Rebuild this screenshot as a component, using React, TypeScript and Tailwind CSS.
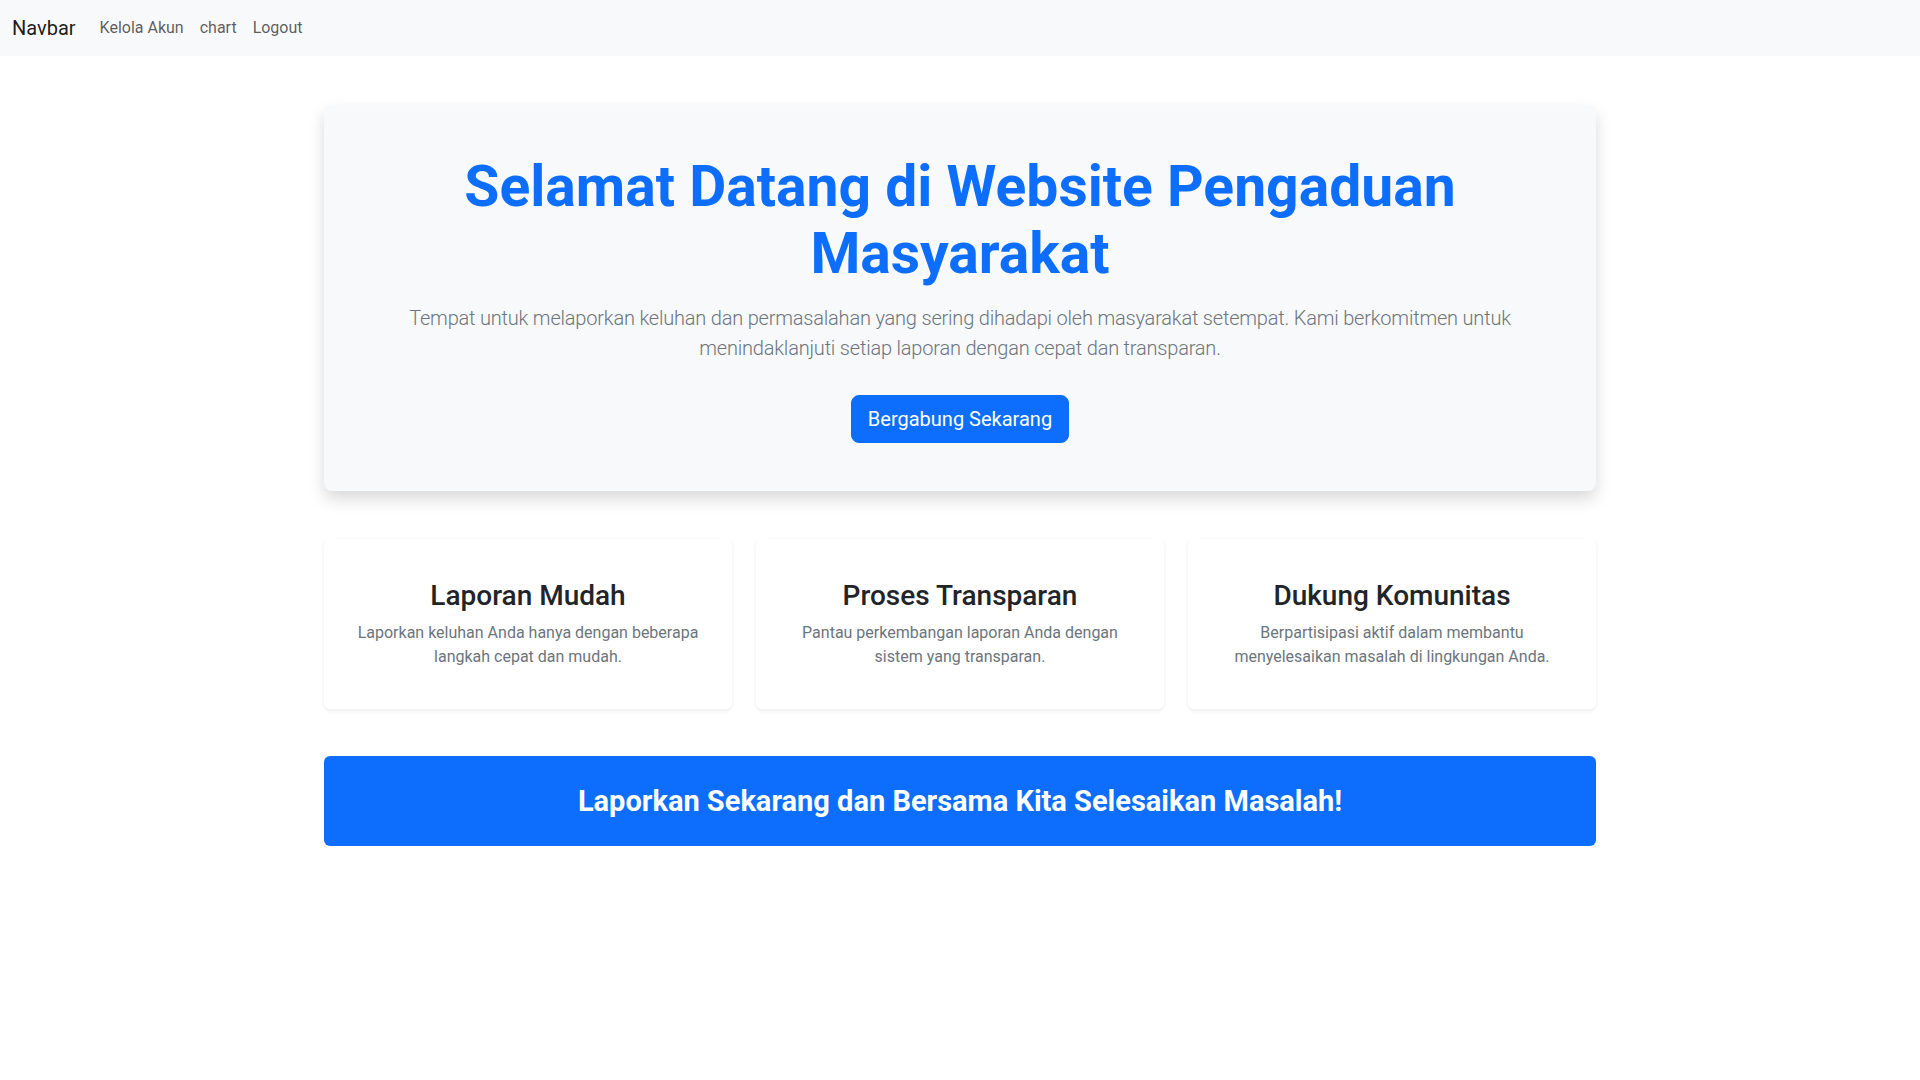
import React from 'react';

const features = [
  {
    title: 'Laporan Mudah',
    text: 'Laporkan keluhan Anda hanya dengan beberapa langkah cepat dan mudah.',
  },
  {
    title: 'Proses Transparan',
    text: 'Pantau perkembangan laporan Anda dengan sistem yang transparan.',
  },
  {
    title: 'Dukung Komunitas',
    text: 'Berpartisipasi aktif dalam membantu menyelesaikan masalah di lingkungan Anda.',
  },
];

const App: React.FC = () => {
  return (
    <div className="min-h-screen bg-white font-['Roboto',sans-serif] text-[#212529]">
      {/* Navbar */}
      <nav className="bg-[#f8f9fa] h-14 flex items-center px-3">
        <a href="#" className="text-xl text-black/90 mr-4 leading-[30px]">Navbar</a>
        <ul className="flex items-center">
          <li><a href="#" className="px-2 text-base text-black/65">Kelola Akun</a></li>
          <li><a href="#" className="px-2 text-base text-black/65">chart</a></li>
          <li><a href="#" className="px-2 text-base text-black/65">Logout</a></li>
        </ul>
      </nav>

      <main className="w-[1272px] mx-auto">
        {/* Hero */}
        <section className="mt-[49px] bg-[#f8f9fa] rounded-lg shadow-[0_8px_16px_rgba(0,0,0,0.15)] p-12 text-center">
          <h1 className="text-[57px] leading-[67px] font-bold text-[#0d6efd] mb-4">
            Selamat Datang di Website Pengaduan Masyarakat
          </h1>
          <p className="text-xl font-light leading-[30px] tracking-[-0.2px] text-[#6c757d]">
            Tempat untuk melaporkan keluhan dan permasalahan yang sering dihadapi oleh masyarakat setempat. Kami berkomitmen untuk menindaklanjuti setiap laporan dengan cepat dan transparan.
          </p>
          <button className="mt-8 bg-[#0d6efd] text-white text-xl leading-[30px] px-4 py-2 rounded-lg border border-[#0d6efd]">
            Bergabung Sekarang
          </button>
        </section>

        {/* Features */}
        <section className="mt-12 grid grid-cols-3 gap-6">
          {features.map((f) => (
            <div key={f.title} className="bg-white rounded-md shadow-[0_2px_4px_rgba(0,0,0,0.075)] px-8 py-10 text-center">
              <h3 className="text-[28px] leading-[1.2] font-medium mb-2">{f.title}</h3>
              <p className="text-base leading-6 text-[#6c757d]">{f.text}</p>
            </div>
          ))}
        </section>

        {/* Call to action */}
        <section className="mt-[47px] bg-[#0d6efd] rounded-md py-[26px] text-center">
          <h2 className="text-[29px] leading-[38px] font-bold text-white">
            Laporkan Sekarang dan Bersama Kita Selesaikan Masalah!
          </h2>
        </section>
      </main>
    </div>
  );
};

export default App;
